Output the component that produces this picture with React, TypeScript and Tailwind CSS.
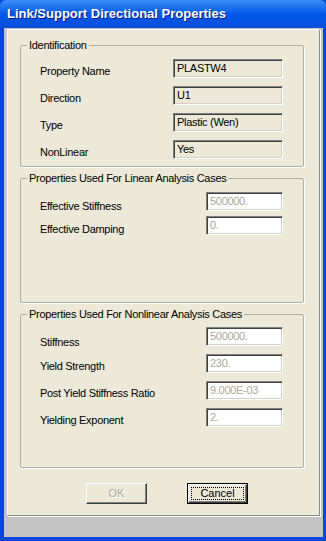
import React from "react";

type Row = { label: string; value: string; labelTop?: number };

const identRows: Row[] = [
	{ label: "Property Name", value: "PLASTW4" },
	{ label: "Direction", value: "U1" },
	{ label: "Type", value: "Plastic (Wen)" },
	{ label: "NonLinear", value: "Yes" },
];

const linearRows: Row[] = [
	{ label: "Effective Stiffness", value: "500000.", labelTop: 7 },
	{ label: "Effective Damping", value: "0.", labelTop: 6 },
];

const nonlinearRows: Row[] = [
	{ label: "Stiffness", value: "500000.", labelTop: 8 },
	{ label: "Yield Strength", value: "230." },
	{ label: "Post Yield Stiffness Ratio", value: "9.000E-03" },
	{ label: "Yielding Exponent", value: "2." },
];

const sunken =
	"border border-t-[#808080] border-l-[#808080] border-r-white border-b-white shadow-[inset_1px_1px_0_#404040,inset_-1px_-1px_0_#d4d0c8]";

function Field({
	value,
	width,
	readOnly,
}: {
	value: string;
	width: string;
	readOnly?: boolean;
}) {
	return (
		<div
			className={`${width} h-[19px] flex items-center pl-[3px] ${sunken} ${
				readOnly ? "bg-[#ece9d8] text-black" : "bg-white text-[#aca899]"
			}`}
		>
			{value}
		</div>
	);
}

function Group({
	title,
	height,
	padTop,
	rowHeight,
	rows,
	fieldWidth,
	readOnly,
}: {
	title: string;
	height: string;
	padTop: string;
	rowHeight: string;
	rows: Row[];
	fieldWidth: string;
	readOnly?: boolean;
}) {
	return (
		<fieldset
			className={`${height} border border-[#b0ae9f] rounded-[2px] shadow-[1px_1px_0_#fff]`}
		>
			<legend className="ml-[6px] px-[2px] h-[14px] leading-[14px]">
				{title}
			</legend>
			<div className={`${padTop} pl-[19px] pr-[20px] flex flex-col`}>
				{rows.map((row) => (
					<div
						key={row.label}
						className={`${rowHeight} flex justify-between items-start`}
					>
						<span
							className="leading-[14px]"
							style={{ marginTop: row.labelTop ?? 5 }}
						>
							{row.label}
						</span>
						<Field value={row.value} width={fieldWidth} readOnly={readOnly} />
					</div>
				))}
			</div>
		</fieldset>
	);
}

export default function App() {
	return (
		<div className="w-[326px] h-[541px] flex flex-col bg-[#0848d8] font-['Liberation_Sans',Arial,sans-serif] text-[11px] tracking-[-0.3px] text-black overflow-hidden">
			<div className="h-[28px] shrink-0 flex items-center pl-[7px] pb-[1px] bg-gradient-to-b from-[#3c8ef7] via-[#0058e8] to-[#0a4fdf] rounded-t-[6px]">
				<span className="text-white font-bold text-[13px] tracking-normal [text-shadow:1px_1px_0_#0a1883]">
					Link/Support Directional Properties
				</span>
			</div>
			<div className="flex-1 flex flex-col ml-[4px] mr-[3px] mb-[4px] bg-[#c3c3c3]">
				<div className="h-[487px] mt-[1px] mx-[3px] bg-[#ece9d8] border border-t-white border-l-white border-r-[#8a8a8a] border-b-[#8a8a8a] shadow-[1px_1px_0_#fff] pt-[8px] pl-[12px] pr-[15px] flex flex-col gap-[4px]">
					<Group
						title="Identification"
						height="h-[129px]"
						padTop="pt-[7px]"
						rowHeight="h-[27px]"
						rows={identRows}
						fieldWidth="w-[110px]"
						readOnly
					/>
					<Group
						title="Properties Used For Linear Analysis Cases"
						height="h-[132px]"
						padTop="pt-[7px]"
						rowHeight="h-[24px]"
						rows={linearRows}
						fieldWidth="w-[77px]"
					/>
					<Group
						title="Properties Used For Nonlinear Analysis Cases"
						height="h-[161px]"
						padTop="pt-[6px]"
						rowHeight="h-[27px]"
						rows={nonlinearRows}
						fieldWidth="w-[77px]"
					/>
					<div className="mt-[11px] flex pl-[66px] gap-[40px] tracking-normal">
						<button
							type="button"
							disabled
							className="w-[61px] h-[21px] bg-[#ece9d8] border border-t-white border-l-white border-r-[#404040] border-b-[#404040] shadow-[inset_-1px_-1px_0_#808080] text-[#aca899] [text-shadow:1px_1px_0_#fff] flex items-center justify-center"
						>
							OK
						</button>
						<button
							type="button"
							className="w-[61px] h-[21px] border border-black bg-[#ece9d8] flex"
						>
							<span className="flex-1 flex p-[2px] border border-t-white border-l-white border-r-[#404040] border-b-[#404040] shadow-[inset_-1px_-1px_0_#808080]">
								<span className="flex-1 flex items-center justify-center border border-dotted border-black">
									Cancel
								</span>
							</span>
						</button>
					</div>
				</div>
			</div>
		</div>
	);
}
